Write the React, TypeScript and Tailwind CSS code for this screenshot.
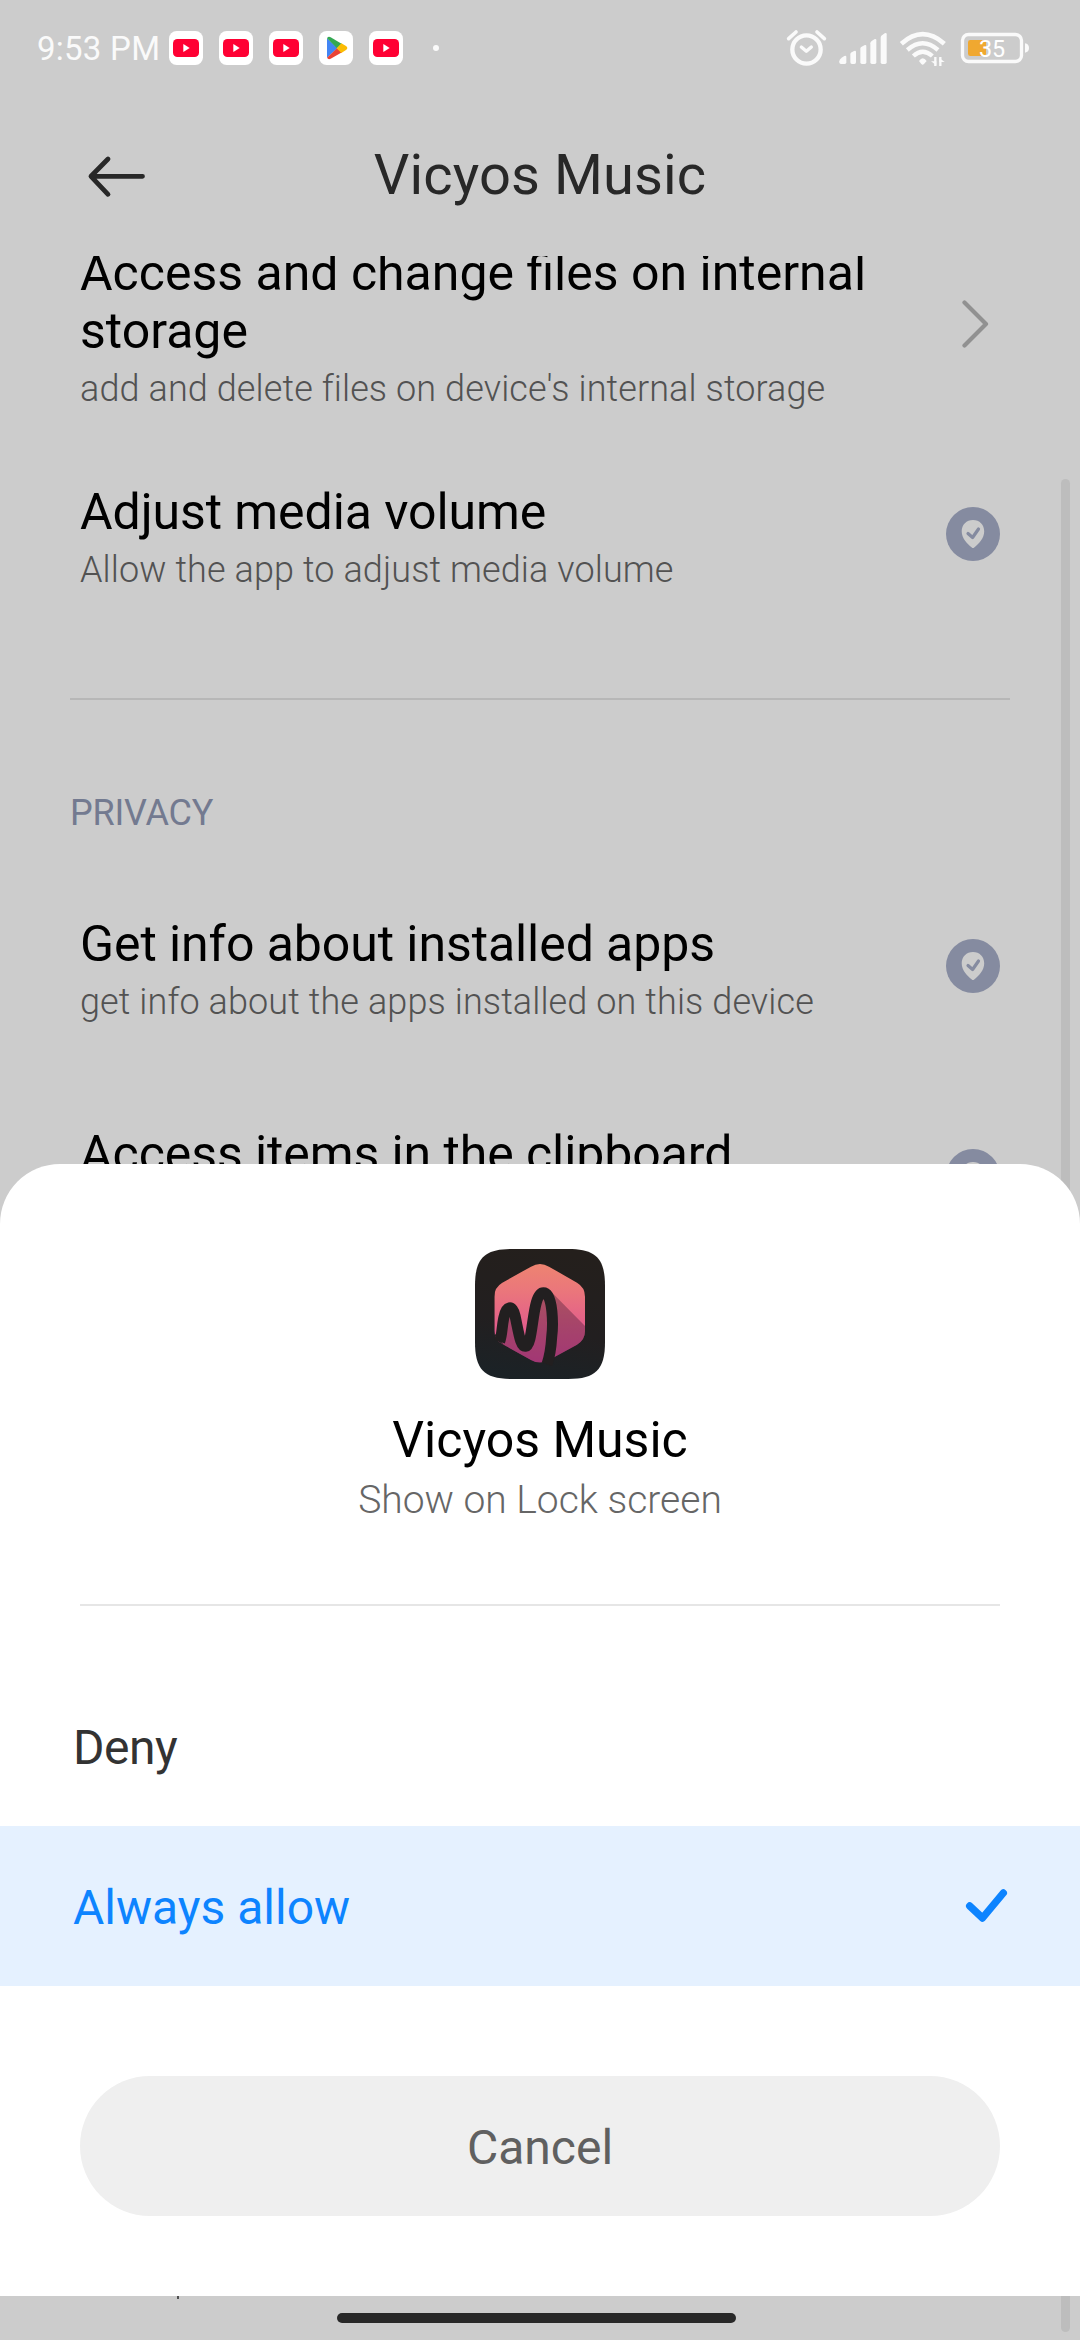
import type { ReactNode } from "react";

function YouTubeIcon() {
  return (
    <svg className="size-[34px]" viewBox="0 0 102 102">
      <rect width="102" height="102" rx="23" fill="#fff" />
      <rect x="12" y="24" width="78" height="54" rx="13" fill="#ff0033" />
      <path d="M43 39v24l19-12z" fill="#fff" />
    </svg>
  );
}

function PlayStoreIcon() {
  return (
    <svg className="size-[34px]" viewBox="0 0 102 102">
      <rect width="102" height="102" rx="23" fill="#fff" />
      <path d="M24 22v58l32-29z" fill="#4285f4" />
      <path d="M24 22q4-7 11-3l34 20-15 13z" fill="#34a853" />
      <path d="M24 80q4 7 11 3l34-19-15-12z" fill="#ea4335" />
      <path d="M67 37l14 8q8 6 0 12l-14 9-14-14z" fill="#fbbc04" />
    </svg>
  );
}

function AlarmIcon() {
  return (
    <svg className="h-[100px] w-[45px]" viewBox="132 0 135 300" fill="none" stroke="#fafafa" strokeLinecap="round" strokeLinejoin="round">
      <circle cx="199.500" cy="148.500" r="42.500" strokeWidth="13" />
      <path d="M184 141l15 13 15-13" strokeWidth="10" />
      <path d="M146 116l22-20M231 96l22 20" strokeWidth="11" />
    </svg>
  );
}

function SignalIcon() {
  return (
    <svg className="ml-[8px] h-[100px] w-[52px]" viewBox="291 0 156 300" fill="#fafafa">
      <path d="M298 184q0-6 7-11l8-5q6-3 6 3v16q0 5-5 5h-11q-5 0-5-5z" />
      <path d="M331 163q0-4 4-6l7-4q6-3 6 3v31q0 5-5 5h-7q-5 0-5-5z" />
      <path d="M361 146q0-4 4-6l8-4q6-3 6 3v48q0 5-5 5h-8q-5 0-5-5z" />
      <path d="M391 130q0-4 4-7l8-5q6-3 6 3v66q0 5-5 5h-8q-5 0-5-5z" />
      <path d="M422 113q0-4 4-7l8-6q6-3 6 3v84q0 5-5 5h-8q-5 0-5-5z" />
    </svg>
  );
}

function WifiIcon() {
  return (
    <svg className="ml-[9px] h-[100px] w-[50px]" viewBox="474 0 150 300" fill="none" stroke="#fafafa">
      <path d="M484 131q64-57 129 0" strokeWidth="14" />
      <path d="M502 150q46-40 92 0" strokeWidth="13" />
      <path d="M520 168q28-26 57 0" strokeWidth="13" />
      <path d="M537 183q11-16 23 0l-8 9q-4 4-8 0z" fill="#fafafa" stroke="none" />
      <path d="M586 171v27M601 198v-27" strokeWidth="7" />
      <path d="M573 184h16v12zM598 174v12h16z" fill="#fafafa" stroke="none" />
    </svg>
  );
}

function BatteryIcon() {
  return (
    <svg className="ml-[11px] h-[100px] w-[72px]" viewBox="657 0 216 300">
      <rect x="667.500" y="103.500" width="177" height="81" rx="18" fill="none" stroke="#fafafa" strokeWidth="10" />
      <rect x="684" y="120" width="54" height="48" rx="7" fill="#f0a830" />
      <path d="M855 130q12 2 12 14t-12 14z" fill="#fafafa" />
      <text x="717" y="171" fontSize="70" fill="#fff" fontFamily="Roboto, sans-serif">35</text>
    </svg>
  );
}

function GrantedIcon() {
  return (
    <svg className="size-[54px] shrink-0" viewBox="0 0 54 54" fill="none">
      <circle cx="27" cy="27" r="27" fill="#858ba0" />
      <path d="M27 13c-6.500 0-11.300 4.800-11.300 11.200 0 7.200 5.300 12.300 10.100 16.300q1.200 1 2.400 0c4.800-4 10-9.100 10-16.300C38.200 17.800 33.500 13 27 13z" fill="#ccc" />
      <path d="M22 26.500l4.600 4 5.900-8.500" stroke="#858ba0" strokeWidth="3.200" strokeLinecap="round" strokeLinejoin="round" />
    </svg>
  );
}

function ChevronIcon() {
  return (
    <svg className="mr-[11px] h-[48px] w-[28px] shrink-0" viewBox="0 0 28 48" fill="none" stroke="#919191" strokeWidth="4.200" strokeLinecap="round" strokeLinejoin="round">
      <path d="M3.500 2.500L25 24 3.500 45.500" />
    </svg>
  );
}

function AppLogo() {
  return (
    <svg className="size-[130px]" viewBox="0 0 390 390">
      <defs>
        <linearGradient id="tile" x1="0.600" y1="0" x2="0.400" y2="1">
          <stop offset="0" stopColor="#241f1c" />
          <stop offset="0.600" stopColor="#221f20" />
          <stop offset="1" stopColor="#1b2226" />
        </linearGradient>
        <linearGradient id="hex" x1="0" y1="0" x2="0" y2="1">
          <stop offset="0" stopColor="#ee8570" />
          <stop offset="0.300" stopColor="#ea757c" />
          <stop offset="0.580" stopColor="#e46189" />
          <stop offset="1" stopColor="#dd4a9c" />
        </linearGradient>
        <clipPath id="hexClip">
          <path d="M168 53q27-16 54 0l84 48q24 14 24 42v104q0 26-24 40l-84 46q-27 15-54 0l-86-48q-24-14-24-40V143q0-28 24-42z" />
        </clipPath>
      </defs>
      <path d="M0 110C0 28 28 0 110 0h170c82 0 110 28 110 110v170c0 82-28 110-110 110H110C28 390 0 362 0 280z" fill="url(#tile)" />
      <g clipPath="url(#hexClip)">
        <rect x="50" y="40" width="290" height="305" fill="url(#hex)" />
        <path d="M78 280L88 205C94 165 114 165 121 200C132 255 140 295 152 293C172 290 170 131 203 131L230 130L390 292V390H78z" fill="#2a1028" fillOpacity="0.330" />
        <path d="M40 254h20l26 34-10 20H40z" fill="#221f20" />
      </g>
      <path d="M74 278C82 255 80 238 86 208C93 169 113 166 120 200C132 255 136 294 152 292C176 290 170 131 205 131C236 131 234 235 230 265C228 300 224 322 216 346" fill="none" stroke="#221f20" strokeWidth="33" />
    </svg>
  );
}

function PermissionRow({ title, detail, children }: { title: string; detail?: string; children: ReactNode }) {
  return (
    <div className="flex h-[210px] items-center justify-between px-[80px]">
      <div className="pt-[5px]">
        <h2 className="text-[50px] leading-[58px] tracking-[-0.08px] text-black">{title}</h2>
        <p className="mt-[8px] h-[42px] text-[36px] leading-[42px] font-light tracking-[0.1px] text-[#525252]">{detail}</p>
      </div>
      {children}
    </div>
  );
}

export default function App() {
  return (
    <main className="relative flex h-[2340px] w-[1080px] flex-col overflow-hidden bg-[#ccc] font-[Roboto,sans-serif]">
      <div className="flex h-[96px] shrink-0 items-start justify-between pr-[49px] pl-[37px]">
        <div className="flex h-[96px] items-center">
          <span className="w-[132px] pt-[2px] text-[33px] leading-[38px] tracking-[0.25px] whitespace-nowrap text-[#fafafa]">9:53 PM</span>
          <div className="flex items-center gap-4">
            <YouTubeIcon />
            <YouTubeIcon />
            <YouTubeIcon />
            <PlayStoreIcon />
            <YouTubeIcon />
          </div>
          <span className="ml-[30px] size-[6px] rounded-full bg-[#fafafa]" />
        </div>
        <div className="flex">
          <AlarmIcon />
          <SignalIcon />
          <WifiIcon />
          <BatteryIcon />
        </div>
      </div>

      <header className="grid h-[160px] shrink-0 grid-cols-[1fr_auto_1fr] items-center px-[86px] pb-[2px]">
        <svg className="mt-[2px] h-[44px] w-[62px]" viewBox="86 154 62 44" fill="none" stroke="#282828" strokeWidth="4.800" strokeLinecap="round" strokeLinejoin="round">
          <path d="M108 159L91 176.300l17 18M91 176.300h51.500" />
        </svg>
        <h1 className="text-[56px] leading-[66px] tracking-[0.12px] text-[#282828]">Vicyos Music</h1>
        <span />
      </header>

      <section className="min-h-0 flex-1 overflow-hidden">
        <div className="-mt-[12px] mb-[20px] flex h-[165px] items-start justify-between px-[80px]">
          <div>
            <h2 className="w-[800px] text-[50px] leading-[58px] text-black">Access and change files on internal storage</h2>
            <p className="mt-[8px] text-[36px] leading-[42px] font-light tracking-[0.1px] text-[#525252]">add and delete files on device's internal storage</p>
          </div>
          <div className="pt-[56px]">
            <ChevronIcon />
          </div>
        </div>
        <PermissionRow title="Adjust media volume" detail="Allow the app to adjust media volume">
          <GrantedIcon />
        </PermissionRow>
        <hr className="mx-[70px] mt-[59px] h-[2px] border-0 bg-[#b7b7b7]" />
        <h3 className="mt-[92px] mb-[27px] pl-[70px] text-[36px] leading-[42px] tracking-[-0.2px] text-[#737a90]">PRIVACY</h3>
        <PermissionRow title="Get info about installed apps" detail="get info about the apps installed on this device">
          <GrantedIcon />
        </PermissionRow>
        <PermissionRow title="Access items in the clipboard">
          <GrantedIcon />
        </PermissionRow>
      </section>

      <div className="absolute top-[479px] right-[10px] bottom-[8px] w-[9px] rounded-full bg-[#bdbdbd]" />
      <div className="absolute bottom-[41px] left-[177px] h-[3px] w-[2px] bg-[#505050]" />
      <div className="absolute bottom-[17px] left-[337px] h-[10px] w-[399px] rounded-full bg-[#282828]" />

      <div className="absolute inset-x-0 top-[1164px] flex h-[1132px] flex-col items-center rounded-t-[60px] bg-white pt-[85px]">
        <AppLogo />
        <h2 className="mt-[32px] text-[50px] leading-[58px] text-black">Vicyos Music</h2>
        <p className="mt-[8px] text-[39px] leading-[46px] font-light text-[#666]">Show on Lock screen</p>
        <hr className="mt-[81px] h-[2px] w-[920px] border-0 bg-[#e6e6e6]" />
        <button className="mt-[60px] flex h-[160px] w-full items-center px-[73px] pt-[2px] text-left text-[48px] leading-[57px] tracking-[-0.5px] text-[#333]">Deny</button>
        <button className="flex h-[160px] w-full items-center justify-between bg-[#e5f1ff] pr-[71px] pl-[73px] text-left text-[48px] leading-[57px] text-[#0d84ff]">
          <span className="pt-[2px]">Always allow</span>
          <svg className="h-[38px] w-[44px]" viewBox="965 1887 44 38" fill="none" stroke="#0d84ff" strokeWidth="7.400" strokeLinecap="round" strokeLinejoin="round">
            <path d="M969.700 1906l12.800 12L1003.300 1893" />
          </svg>
        </button>
        <button className="mt-[90px] flex h-[140px] w-[920px] items-center justify-center rounded-full bg-[#efefef] pt-[3px] text-[48px] leading-[57px] text-[#606060]">Cancel</button>
      </div>
    </main>
  );
}
